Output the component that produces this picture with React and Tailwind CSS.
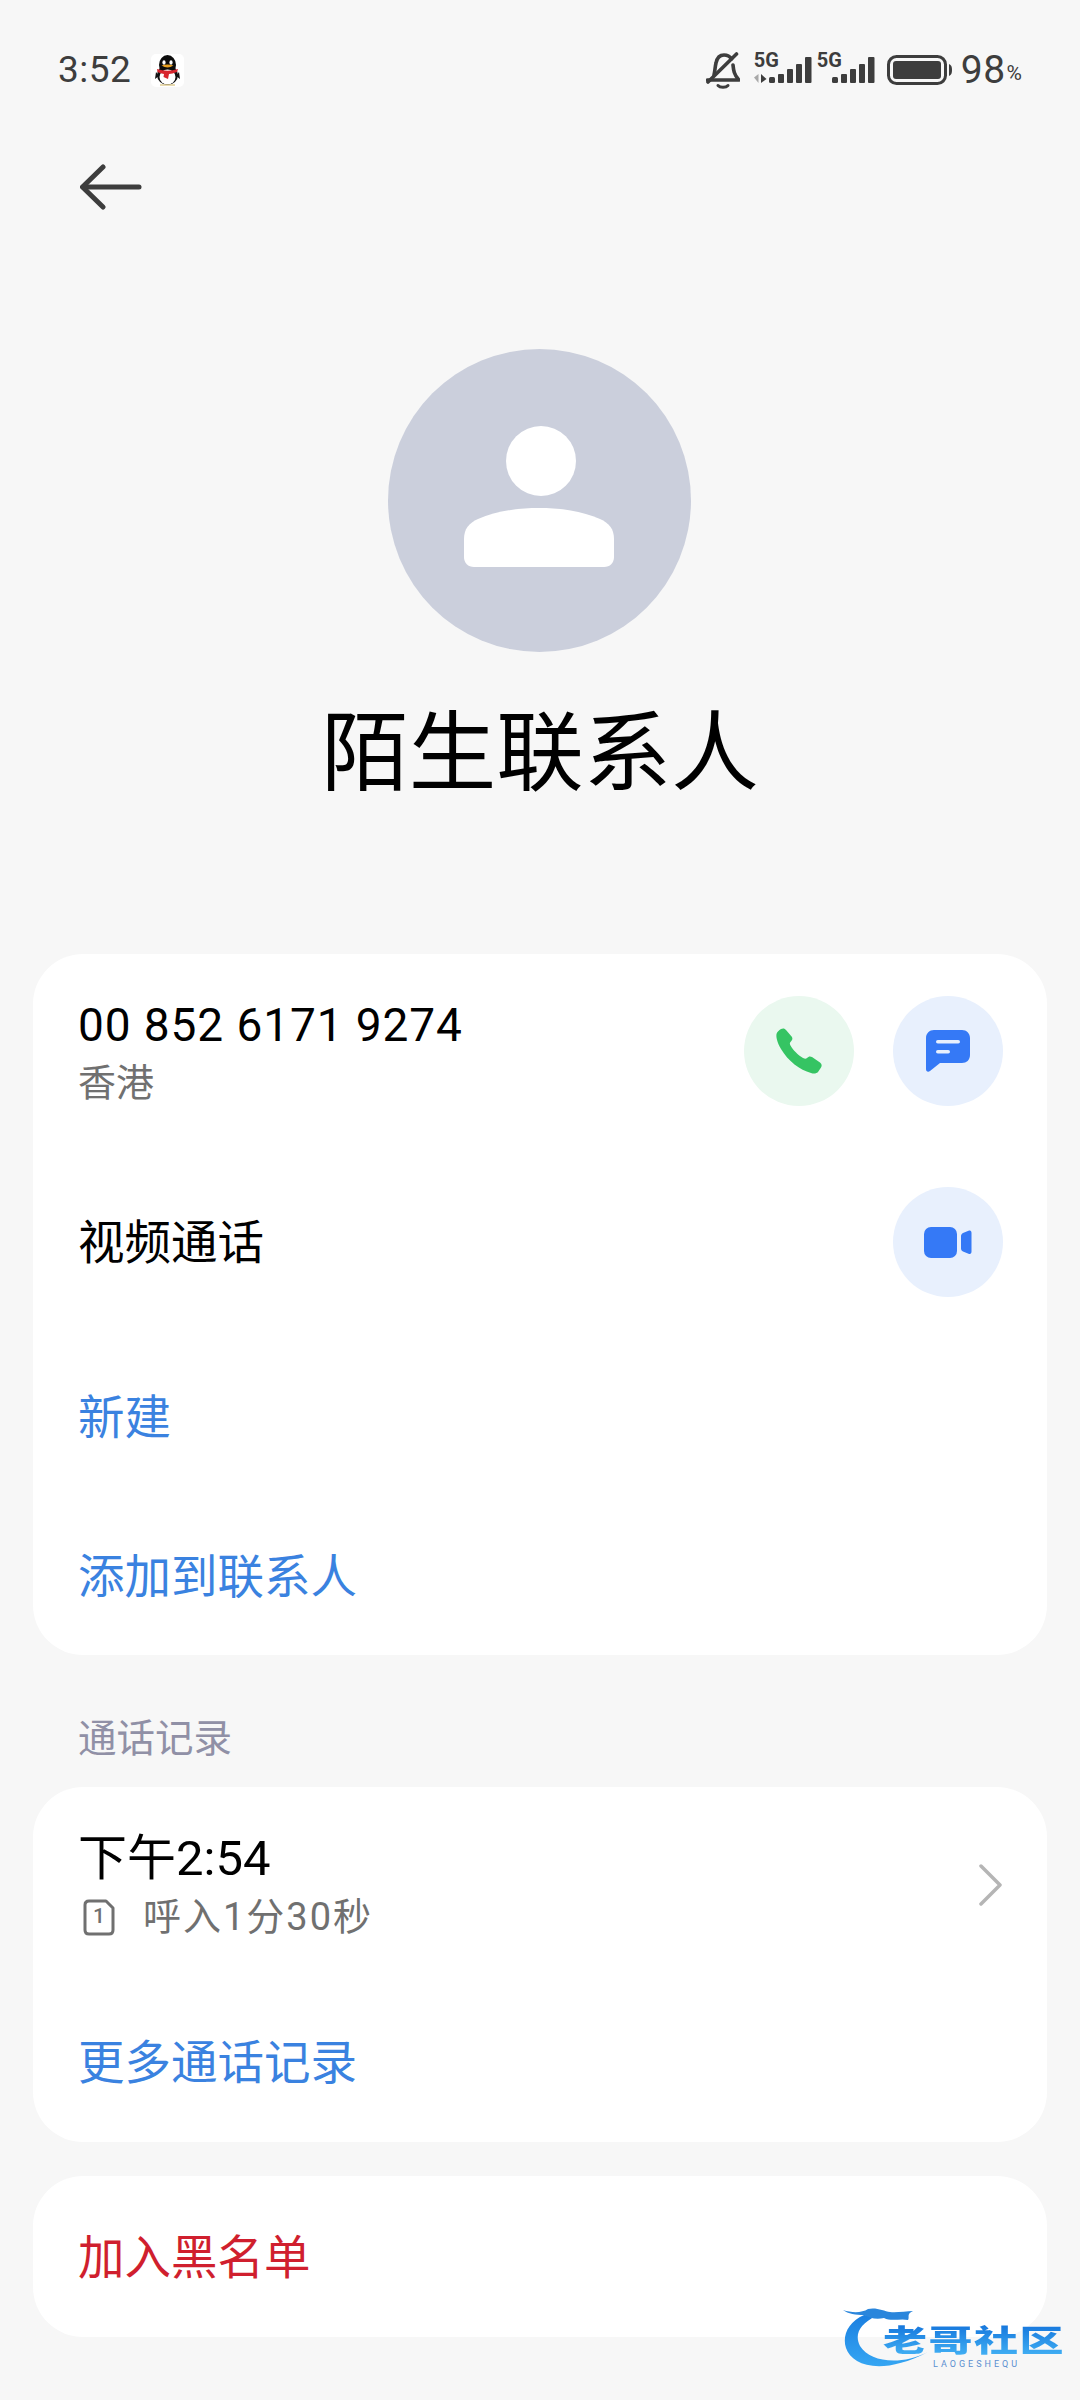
// App.jsx
const FONT = "font-[Roboto,'Noto_Sans_CJK_SC',sans-serif]";

const BellMuted = () => (
  <svg width="34" height="37" viewBox="0 0 34 37" fill="none" stroke="#3d3d3d" strokeWidth="3.6" strokeLinecap="round" strokeLinejoin="round">
    <path d="M8 23 C9 19 9 15 10 11 C11 6 14 3 18 3 C21 3 24 4.500 25.500 7" />
    <path d="M27 13 C27.500 18 28 23 33 28 H1.500" />
    <path d="M30.500 2 L2 30" />
    <path d="M12 33.500 C14 35.800 20 35.800 22 33.500" strokeWidth="3" />
  </svg>
);

const SignalBars = ({ arrows }) => (
  <svg width="58" height="36" viewBox="0 0 58 36" fill="#3d3d3d">
    {arrows && <path d="M0 25.500 L4.500 22 V31 Z" fill="#a8a8a8" />}
    {arrows && <path d="M7 22 L12.500 27 L7 31 Z" />}
    <rect x="15" y="25" width="6" height="6" rx="1.500" />
    <rect x="24" y="22" width="6" height="9" rx="1" />
    <rect x="33" y="17" width="6" height="14" rx="1" />
    <rect x="42" y="12" width="6" height="19" rx="1" />
    <rect x="51" y="5" width="6.500" height="26" rx="1" />
  </svg>
);

const Signal = ({ arrows, className = '' }) => (
  <div className={`relative w-[58px] h-[36px] ${className}`}>
    <SignalBars arrows={arrows} />
    <span className="absolute left-0 top-[-2px] text-[20px] leading-[20px] font-bold text-[#3d3d3d]">5G</span>
  </div>
);

const QQ = () => (
  <svg width="33" height="33" viewBox="0 0 33 33">
    <rect width="33" height="33" rx="5" fill="#ffffff" />
    <ellipse cx="16.500" cy="21" rx="10.500" ry="10" fill="#111" />
    <ellipse cx="16.500" cy="11" rx="8.500" ry="10" fill="#0c0c0c" />
    <path d="M5 18 L4 25 L8 22 Z M28 18 L29 25 L25 22 Z" fill="#111" />
    <ellipse cx="16.500" cy="23" rx="8" ry="7.500" fill="#fff" />
    <ellipse cx="13" cy="8.500" rx="1.600" ry="2.300" fill="#fff" />
    <ellipse cx="20" cy="8.500" rx="1.600" ry="2.300" fill="#fff" />
    <path d="M10.500 11.500 Q16.500 9.500 22.500 11.500 Q16.500 15.500 10.500 11.500Z" fill="#e8a020" />
    <path d="M6 15 Q16.500 18.500 27 15 L26 18 Q21 20 18 20 L17 25 L12.500 23 L13 20 Q9 19.500 6.500 18 Z" fill="#d8262e" />
    <path d="M9 31 H24" stroke="#d9c27a" strokeWidth="1.200" />
  </svg>
);

const StatusBar = () => (
  <div className="flex items-center justify-between h-[48px] mt-[46px] pl-[58px] pr-[58px]">
    <div className="flex items-center">
      <span className="text-[37px] leading-[48px] text-[#3d3d3d] tracking-[0.5px]">3:52</span>
      <span className="ml-[20px] flex"><QQ /></span>
    </div>
    <div className="flex items-center">
      <BellMuted />
      <Signal arrows className="ml-[14px]" />
      <Signal className="ml-[5px]" />
      <svg className="ml-[12px]" width="66" height="30" viewBox="0 0 66 30">
        <rect x="1.500" y="1.500" width="57" height="27" rx="8" fill="none" stroke="#3d3d3d" strokeWidth="3" />
        <rect x="6" y="6" width="48" height="18" rx="3" fill="#3d3d3d" />
        <path d="M62 9 C64.500 10 65 12 65 15 C65 18 64.500 20 62 21 Z" fill="#3d3d3d" />
      </svg>
      <span className="ml-[8px] text-[39px] leading-[48px] text-[#3d3d3d] tracking-[0.5px]">98</span>
      <span className="ml-[1px] mt-[6px] text-[21px] leading-[48px] text-[#3d3d3d]">%</span>
    </div>
  </div>
);

const Avatar = () => (
  <svg className="ml-[388px] block" width="303" height="303" viewBox="0 0 303 303">
    <circle cx="151.500" cy="151.500" r="151.500" fill="#cbcfdc" />
    <circle cx="153" cy="112" r="35" fill="#ffffff" />
    <path d="M76 190 C76 180 81 174 90 170 C108 162 130 159 151 159 C172 159 194 162 212 170 C221 174 226 180 226 190 V208 C226 214 222 218 216 218 H86 C80 218 76 214 76 208Z" fill="#ffffff" />
  </svg>
);

const PhoneIcon = () => (
  <svg width="46" height="46" viewBox="0 0 46 46" fill="#35c463">
    <path d="M5 1 C7 0 9 0.500 10 2 L16 9 C17 11 16 12.500 14.500 14 C13.500 15 13.800 16 14.500 17.500 C17 22 22 27 27 30 C29 31 30 31 31 30 C32.500 28.500 34 28 36 29 L44 34.500 C46 36 46 38 45 39.500 L42 44 C40.500 45.500 38 46 35 45 C24 42 12 33 5 21 C1 14 0 9 0.500 6 C1 4 3 2 5 1Z" />
  </svg>
);

const ChatIcon = () => (
  <svg width="44" height="42" viewBox="0 0 44 42">
    <path d="M8 0 H36 C40.500 0 44 3.500 44 8 V25 C44 30 40.500 33 36 33 H14 L4 41 C2 42.500 0 41.500 0 39 V8 C0 3.500 3.500 0 8 0Z" fill="#3579f6" />
    <rect x="10" y="10" width="24" height="3.500" rx="1.750" fill="#e8f0fd" />
    <rect x="10" y="20" width="14" height="3.500" rx="1.750" fill="#e8f0fd" />
  </svg>
);

const VideoIcon = () => (
  <svg width="48" height="31" viewBox="0 0 48 31" fill="#3579f6">
    <rect x="0" y="0" width="33" height="31" rx="7" />
    <path d="M37 9 C37 7.500 38 6.500 39 6 L44.500 3.800 C46.500 3 47.500 4 47.500 6 V24.500 C47.500 26.500 46.500 27.500 44.500 26.700 L39 24.500 C38 24 37 23 37 21.500Z" />
  </svg>
);

const Circle = ({ className, children }) => (
  <div className={`flex items-center justify-center w-[110px] h-[110px] rounded-full ${className}`}>{children}</div>
);

const Card = ({ className = '', children }) => (
  <div className={`mx-[33px] bg-white rounded-[50px] ${className}`}>{children}</div>
);

const LinkRow = ({ children, color = 'text-[#3a82e0]', height = 'h-[158px]' }) => (
  <div className={`flex items-center px-[45px] pt-[4px] text-[46.500px] ${height} ${color}`}>{children}</div>
);

const SimOne = () => (
  <div className="relative w-[32px] h-[37px] ml-[5px]">
    <svg width="32" height="37" viewBox="0 0 32 37" fill="none" stroke="#707070" strokeWidth="3" strokeLinejoin="round">
      <path d="M6 2 H23 L30 9 V31 C30 33.500 28.500 35 26 35 H6 C3.500 35 2 33.500 2 31 V6 C2 3.500 3.500 2 6 2Z" />
    </svg>
    <span className="absolute inset-0 flex items-center justify-center text-[21px] font-medium text-[#707070]">1</span>
  </div>
);

const Watermark = () => (
  <div className="absolute left-[840px] top-[2300px] w-[230px] h-[80px] pointer-events-none">
    <svg className="absolute left-0 top-0" width="95" height="75" viewBox="0 0 95 75">
      <defs>
        <linearGradient id="arc" x1="0" y1="0" x2="0" y2="1">
          <stop offset="0" stopColor="#1b7fe0" />
          <stop offset="1" stopColor="#35a6f3" />
        </linearGradient>
      </defs>
      <path d="M24 15 C8 22 2 36 6 48 C12 66 42 76 88 52 C60 66 30 62 20 46 C14 34 20 24 36 16 Z" fill="url(#arc)" />
      <path d="M3 10 C12 13 22 13 28 9 C36 7 44 11 50 12 C56 13 66 11 73 11 C66 14 70 17 68 20 C60 18 52 22 44 18 C36 20 30 18 24 15 C16 15 8 14 3 10Z" fill="#2a86dc" />
    </svg>
    <div className="absolute left-[43px] top-[16px] h-[50px] text-[44px] leading-[50px] font-black whitespace-nowrap tracking-[1.500px] scale-y-[0.68] bg-linear-to-b from-[#1575dc] to-[#45b4f5] bg-clip-text text-transparent">老哥社区</div>
    <div className="absolute left-[93px] top-[59px] text-[9px] leading-[10px] tracking-[3px] whitespace-nowrap text-[#5a8fd0]">LAOGESHEQU</div>
  </div>
);

export default function App() {
  return (
    <div className={`relative w-[1080px] h-[2400px] overflow-hidden bg-[#f7f7f7] ${FONT}`}>
      <StatusBar />

      <div className="mt-[70px] ml-[80px]">
        <svg className="block" width="62" height="46" viewBox="0 0 62 46" fill="none" stroke="#3d3d3d" strokeWidth="5" strokeLinecap="round" strokeLinejoin="round">
          <path d="M59 23 H3" />
          <path d="M23 3 L2.500 23 L23 43" />
        </svg>
      </div>

      <div className="mt-[139px]"><Avatar /></div>

      <div className="mt-[52px] h-[100px] text-center text-[87.500px] leading-[100px] text-black">陌生联系人</div>

      <Card className="mt-[150px]">
        <div className="flex items-center h-[192px] pt-[2px] pl-[45px] pr-[44px]">
          <div className="flex-1 pt-[4px]">
            <div className="text-[46px] leading-[54px] text-black tracking-[0.9px]">00 852 6171 9274</div>
            <div className="text-[38px] leading-[50px] mt-[6px] text-[#707070]">香港</div>
          </div>
          <Circle className="bg-[#eaf8ef]"><PhoneIcon /></Circle>
          <Circle className="ml-[39px] bg-[#e8f0fd]"><ChatIcon /></Circle>
        </div>
        <div className="flex items-center justify-between h-[192px] pl-[45px] pr-[44px] text-[46.500px] text-black">
          <span className="pt-[4px]">视频通话</span>
          <Circle className="bg-[#e8f0fd]"><VideoIcon /></Circle>
        </div>
        <LinkRow>新建</LinkRow>
        <LinkRow height="h-[159px]">添加到联系人</LinkRow>
      </Card>

      <div className="mt-[60px] mb-[24px] pl-[78px] h-[48px] text-[38.500px] leading-[48px] text-[#9090a6]">通话记录</div>

      <Card>
        <div className="relative flex flex-col h-[195px] pl-[45px] pt-[45px]">
          <div className="text-[49px] leading-[54px] text-black">下午2:54</div>
          <div className="flex items-center mt-[6px]">
            <SimOne />
            <span className="ml-[28px] text-[38px] leading-[50px] text-[#707070] tracking-[2px]">呼入1分30秒</span>
          </div>
          <svg className="absolute right-[44px] top-[77px]" width="24" height="42" viewBox="0 0 24 42" fill="none" stroke="#b5b5b5" strokeWidth="3.500" strokeLinecap="round" strokeLinejoin="round">
            <path d="M2 2 L21 21 L2 40" />
          </svg>
        </div>
        <LinkRow height="h-[160px]">更多通话记录</LinkRow>
      </Card>

      <Card className="mt-[34px]">
        <LinkRow color="text-[#d01f2e]" height="h-[161px]">加入黑名单</LinkRow>
      </Card>

      <Watermark />
    </div>
  );
}
